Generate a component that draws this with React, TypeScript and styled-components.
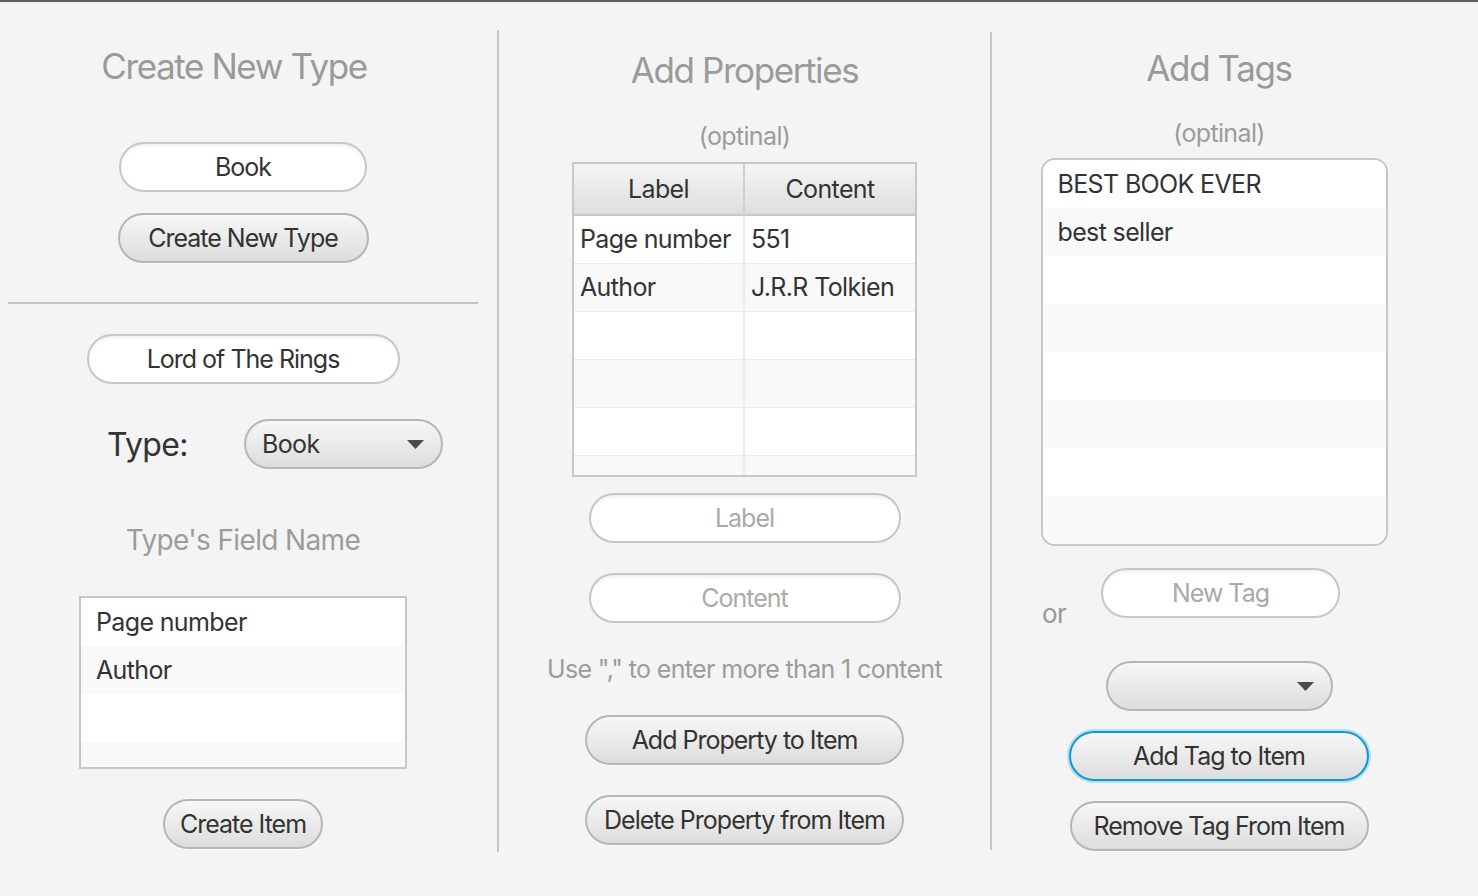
import styled, { createGlobalStyle } from "styled-components";

const GlobalStyle = createGlobalStyle`
  html, body {
    margin: 0;
    padding: 0;
    background: #f4f4f4;
  }
  body {
    font-family: Inter, "Noto Sans", "Liberation Sans", sans-serif;
    color: #333;
    letter-spacing: -0.04em;
  }
`;

const Window = styled.div`
  width: 1478px;
  height: 896px;
  box-sizing: border-box;
  border-top: 2px solid #5e5e5e;
  background: #f4f4f4;
  display: flex;
  overflow: hidden;
`;

const Column = styled.section<{ $width: number }>`
  width: ${(p) => p.$width}px;
  flex-shrink: 0;
  display: flex;
  flex-direction: column;
  align-items: center;
`;

const Divider = styled.div<{ $top: number; $height: number; $left?: number }>`
  width: 2px;
  flex-shrink: 0;
  margin-top: ${(p) => p.$top}px;
  margin-left: ${(p) => p.$left ?? 0}px;
  height: ${(p) => p.$height}px;
  background: #cbc3c3;
`;

const HRule = styled.div<{ $mt: number }>`
  margin-top: ${(p) => p.$mt}px;
  width: 470px;
  height: 2px;
  background: #cbc3c3;
`;

const Heading = styled.h1<{ $mt: number; $shift?: number }>`
  margin: ${(p) => p.$mt}px 0 0 ${(p) => (p.$shift ?? 0) * 2}px;
  font-size: 35px;
  line-height: 44px;
  font-weight: 400;
  color: #9a9a9a;
  letter-spacing: -0.04em;
`;

const SubTitle = styled.div<{ $mt: number; $size?: number }>`
  margin-top: ${(p) => p.$mt}px;
  font-size: ${(p) => p.$size ?? 25}px;
  line-height: 32px;
  color: #9c9c9c;
`;

const TextField = styled.input<{ $mt: number; $width: number }>`
  margin-top: ${(p) => p.$mt}px;
  width: ${(p) => p.$width}px;
  height: 50px;
  box-sizing: border-box;
  border: 2px solid #c6c6c6;
  border-radius: 25px;
  background: #fff;
  box-shadow: inset 0 4px 4px -3px rgba(0, 0, 0, 0.1);
  font-family: inherit;
  font-size: 25px;
  letter-spacing: -0.04em;
  color: #333;
  text-align: center;
  outline: none;
  padding: 0 16px;
  &::placeholder {
    color: #aaa;
  }
`;

const Button = styled.button<{ $mt: number; $width: number; $focused?: boolean }>`
  margin-top: ${(p) => p.$mt}px;
  width: ${(p) => p.$width}px;
  height: 50px;
  box-sizing: border-box;
  border: 2px solid ${(p) => (p.$focused ? "#0e9bd2" : "#b6b6b6")};
  border-radius: 25px;
  background: linear-gradient(#f7f7f7, #dddddd);
  box-shadow: ${(p) =>
    p.$focused ? "0 0 0 2px rgba(110, 196, 232, 0.45)" : "0 1px 0 rgba(255,255,255,0.6)"};
  font-family: inherit;
  font-size: 25px;
  letter-spacing: -0.04em;
  color: #333;
  padding: 0;
  cursor: pointer;
`;

const Combo = styled.div<{ $mt?: number; $width: number }>`
  margin-top: ${(p) => p.$mt ?? 0}px;
  width: ${(p) => p.$width}px;
  height: 50px;
  box-sizing: border-box;
  border: 2px solid #b6b6b6;
  border-radius: 25px;
  background: linear-gradient(#f7f7f7, #dddddd);
  display: flex;
  align-items: center;
  justify-content: space-between;
  padding: 0 17px 0 16px;
  font-size: 25px;
  color: #333;
`;

const Arrow = () => (
  <svg width="17" height="9" viewBox="0 0 17 9">
    <path d="M0 0 H17 L8.5 9 Z" fill="#4a4a4a" />
  </svg>
);

const TypeRow = styled.div<{ $mt: number; $left: number }>`
  margin-top: ${(p) => p.$mt}px;
  margin-left: ${(p) => p.$left}px;
  align-self: flex-start;
  display: flex;
  align-items: center;
`;

const TypeLabel = styled.span`
  width: 137px;
  font-size: 32px;
  color: #333;
`;

const OrLabel = styled.span`
  width: 59px;
  margin-top: 30px;
  font-size: 26px;
  line-height: 32px;
  color: #999;
`;

const ListBox = styled.div<{
  $mt: number;
  $width: number;
  $height: number;
  $rounded?: boolean;
  $shift?: number;
}>`
  margin-top: ${(p) => p.$mt}px;
  margin-left: ${(p) => (p.$shift ?? 0) * 2}px;
  width: ${(p) => p.$width}px;
  height: ${(p) => p.$height}px;
  box-sizing: border-box;
  border: 2px solid #c6c6c6;
  border-radius: ${(p) => (p.$rounded ? "14px" : "0")};
  background: #fff;
  overflow: hidden;
`;

const ListRow = styled.div<{ $odd: boolean; $pad: number }>`
  height: 48px;
  flex-shrink: 0;
  display: flex;
  align-items: center;
  padding-left: ${(p) => p.$pad}px;
  background: ${(p) => (p.$odd ? "#f9f9f9" : "#fff")};
  font-size: 25px;
  color: #333;
`;

const Table = styled.div<{ $mt: number }>`
  margin-top: ${(p) => p.$mt}px;
  width: 345px;
  height: 315px;
  box-sizing: border-box;
  border: 2px solid #c8c8c8;
  background: #fff;
  overflow: hidden;
`;

const TableGrid = styled.div`
  display: grid;
  grid-template-columns: 171px 1fr;
`;

const HeaderCell = styled.div`
  height: 52px;
  box-sizing: border-box;
  display: flex;
  align-items: center;
  justify-content: center;
  background: linear-gradient(#f5f5f5, #dedede);
  border-right: 2px solid #cfcfcf;
  border-bottom: 2px solid #c8c8c8;
  font-size: 25px;
  color: #333;
  &:nth-child(2n) {
    border-right: none;
  }
`;

const Cell = styled.div<{ $odd: boolean }>`
  height: 48px;
  box-sizing: border-box;
  display: flex;
  align-items: center;
  padding: 0 0 2px 6px;
  background: ${(p) => (p.$odd ? "#f9f9f9" : "#fff")};
  border-right: 2px solid #ececec;
  border-bottom: 1px solid #ececec;
  font-size: 25px;
  color: #333;
  white-space: nowrap;
  &:nth-child(2n) {
    border-right: none;
  }
`;

const OrRow = styled.div<{ $mt: number; $left: number }>`
  margin-top: ${(p) => p.$mt}px;
  margin-left: ${(p) => p.$left}px;
  height: 50px;
  align-self: flex-start;
  display: flex;
  align-items: flex-start;
`;

const fields = ["Page number", "Author", "", ""];
const properties: [string, string][] = [
  ["Page number", "551"],
  ["Author", "J.R.R Tolkien"],
  ["", ""],
  ["", ""],
  ["", ""],
  ["", ""],
];
const tags = ["BEST BOOK EVER", "best seller", "", "", "", "", "", "", ""];

export default function App() {
  return (
    <>
      <GlobalStyle />
      <Window>
        <Column $width={486}>
          <Heading $mt={42} $shift={-9}>Create New Type</Heading>
          <TextField $mt={54} $width={248} defaultValue="Book" />
          <Button $mt={21} $width={251}>Create New Type</Button>
          <HRule $mt={39} />
          <TextField $mt={30} $width={313} defaultValue="Lord of The Rings" />
          <TypeRow $mt={35} $left={107}>
            <TypeLabel>Type:</TypeLabel>
            <Combo $width={199}>
              <span>Book</span>
              <Arrow />
            </Combo>
          </TypeRow>
          <SubTitle $mt={55} $size={28}>Type's Field Name</SubTitle>
          <ListBox $mt={40} $width={328} $height={173}>
            {fields.map((f, i) => (
              <ListRow key={i} $odd={i % 2 === 1} $pad={15}>
                {f}
              </ListRow>
            ))}
          </ListBox>
          <Button $mt={30} $width={160}>Create Item</Button>
        </Column>

        <Divider $top={28} $height={822} $left={11} />

        <Column $width={491}>
          <Heading $mt={46}>Add Properties</Heading>
          <SubTitle $mt={28}>(optinal)</SubTitle>
          <Table $mt={10}>
            <TableGrid>
              <HeaderCell>Label</HeaderCell>
              <HeaderCell>Content</HeaderCell>
              {properties.map(([label, content], i) => [
                <Cell key={`l${i}`} $odd={i % 2 === 1}>
                  {label}
                </Cell>,
                <Cell key={`c${i}`} $odd={i % 2 === 1}>
                  {content}
                </Cell>,
              ])}
            </TableGrid>
          </Table>
          <TextField $mt={16} $width={312} placeholder="Label" />
          <TextField $mt={30} $width={312} placeholder="Content" />
          <SubTitle $mt={30}>Use "," to enter more than 1 content</SubTitle>
          <Button $mt={30} $width={319}>Add Property to Item</Button>
          <Button $mt={30} $width={319}>Delete Property from Item</Button>
        </Column>

        <Divider $top={30} $height={818} />

        <Column $width={454}>
          <Heading $mt={44}>Add Tags</Heading>
          <SubTitle $mt={27}>(optinal)</SubTitle>
          <ListBox $mt={9} $width={347} $height={388} $rounded $shift={-5}>
            {tags.map((t, i) => (
              <ListRow key={i} $odd={i % 2 === 1} $pad={15}>
                {t}
              </ListRow>
            ))}
          </ListBox>
          <OrRow $mt={22} $left={50}>
            <OrLabel>or</OrLabel>
            <TextField $mt={0} $width={239} placeholder="New Tag" />
          </OrRow>
          <Combo $mt={43} $width={227}>
            <span />
            <Arrow />
          </Combo>
          <Button $mt={20} $width={300} $focused>Add Tag to Item</Button>
          <Button $mt={20} $width={299}>Remove Tag From Item</Button>
        </Column>
      </Window>
    </>
  );
}
